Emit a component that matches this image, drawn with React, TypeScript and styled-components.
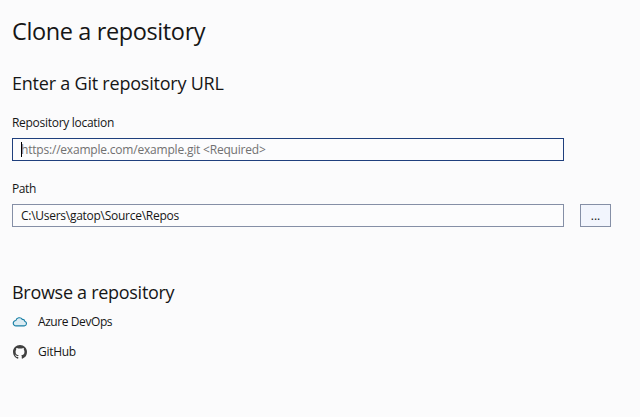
import React from "react";
import styled, { createGlobalStyle } from "styled-components";

const GlobalStyle = createGlobalStyle`
  *, *::before, *::after { box-sizing: border-box; }
  body {
    margin: 0;
    background: #fbfbfc;
    color: #161616;
    font: 12px/16px "Open Sans", "Noto Sans", sans-serif;
    overflow: hidden;
  }
`;

const Page = styled.main`
  display: flex;
  flex-direction: column;
  height: 417px;
  padding: 15px 29px 0 12px;
  white-space: nowrap;
`;

const Title = styled.h1`
  margin: 0;
  font-size: 23.5px;
  line-height: 32px;
  font-weight: 400;
  letter-spacing: -0.38px;
`;

const Heading = styled.h2<{ $gap: number; $tracking: number }>`
  margin: ${(p) => p.$gap}px 0 0;
  font-size: 18px;
  line-height: 26px;
  font-weight: 400;
  letter-spacing: ${(p) => p.$tracking}px;
`;

const Label = styled.label<{ $gap: number; $tracking: number }>`
  margin-top: ${(p) => p.$gap}px;
  height: 16px;
  letter-spacing: ${(p) => p.$tracking}px;
`;

const FieldRow = styled.div`
  display: grid;
  grid-template-columns: 552px 31px;
  column-gap: 16px;
  height: 23px;
  margin-top: 7px;
`;

const Field = styled.div`
  position: relative;
  display: flex;
`;

const Input = styled.input<{ $focused?: boolean; $tracking: number }>`
  flex: 1;
  height: 23px;
  padding: 0 8px;
  border: 1px solid ${(p) => (p.$focused ? "#1f3f7d" : "#858fa6")};
  border-radius: 0;
  outline: none;
  background: #fcfcfd;
  color: #161616;
  font: inherit;
  letter-spacing: ${(p) => p.$tracking}px;
  &::placeholder { color: #717171; opacity: 1; }
`;

const Caret = styled.span`
  position: absolute;
  left: 9px;
  top: 4px;
  width: 1px;
  height: 15px;
  background: #000;
`;

const BrowseButton = styled.button`
  height: 23px;
  padding: 0;
  border: 1px solid #858fa6;
  background: #f2f5fd;
  color: #161616;
  font: inherit;
`;

const Sources = styled.nav`
  display: flex;
  flex-direction: column;
  gap: 14px;
  margin-top: 9px;
`;

const Source = styled.a<{ $tracking: number }>`
  display: flex;
  align-items: center;
  gap: 10px;
  height: 16px;
  color: inherit;
  letter-spacing: ${(p) => p.$tracking}px;
  svg { flex: none; }
`;

const CloudIcon = () => (
  <svg width="16" height="16" viewBox="0 0 16 16">
    <path
      d="M4 11.9h8.3a2.35 2.35 0 0 0 .5-4.6 2.4 2.4 0 0 0-2.5-1.9A3.5 3.5 0 0 0 3.9 6.5a2.7 2.7 0 0 0 .1 5.4z"
      fill="#dcecf3"
      stroke="#187fa5"
      strokeWidth="1.15"
      strokeLinejoin="round"
    />
  </svg>
);

const GitHubIcon = () => (
  <svg width="16" height="16" viewBox="0 0 16 16">
    <path
      transform="translate(1 1) scale(.875)"
      fill="#404040"
      d="M8 0C3.58 0 0 3.58 0 8c0 3.54 2.29 6.53 5.47 7.59.4.07.55-.17.55-.38 0-.19-.01-.82-.01-1.49-2.01.37-2.53-.49-2.69-.94-.09-.23-.48-.94-.82-1.13-.28-.15-.68-.52-.01-.53.63-.01 1.08.58 1.23.82.72 1.21 1.87.87 2.33.66.07-.52.28-.87.51-1.07-1.78-.2-3.64-.89-3.64-3.95 0-.87.31-1.59.82-2.15-.08-.2-.36-1.02.08-2.12 0 0 .67-.21 2.2.82.64-.18 1.32-.27 2-.27s1.36.09 2 .27c1.53-1.04 2.2-.82 2.2-.82.44 1.1.16 1.92.08 2.12.51.56.82 1.27.82 2.15 0 3.07-1.87 3.75-3.65 3.95.29.25.54.73.54 1.48 0 1.07-.01 1.93-.01 2.2 0 .21.15.46.55.38A8.01 8.01 0 0 0 16 8c0-4.42-3.58-8-8-8z"
    />
  </svg>
);

export default function App() {
  return (
    <>
      <GlobalStyle />
      <Page>
        <Title>Clone a repository</Title>
        <Heading $gap={23} $tracking={-0.22}>Enter a Git repository URL</Heading>
        <Label $gap={19} $tracking={-0.29} htmlFor="location">Repository location</Label>
        <FieldRow>
          <Field>
            <Input $focused $tracking={-0.2} id="location" placeholder="https://example.com/example.git <Required>" />
            <Caret />
          </Field>
        </FieldRow>
        <Label $gap={20} $tracking={-0.4} htmlFor="path">Path</Label>
        <FieldRow>
          <Field>
            <Input $tracking={-0.27} id="path" defaultValue="C:\Users\gatop\Source\Repos" />
          </Field>
          <BrowseButton>...</BrowseButton>
        </FieldRow>
        <Heading $gap={52} $tracking={-0.29}>Browse a repository</Heading>
        <Sources>
          <Source $tracking={-0.42}><CloudIcon />Azure DevOps</Source>
          <Source $tracking={-0.3}><GitHubIcon />GitHub</Source>
        </Sources>
      </Page>
    </>
  );
}
